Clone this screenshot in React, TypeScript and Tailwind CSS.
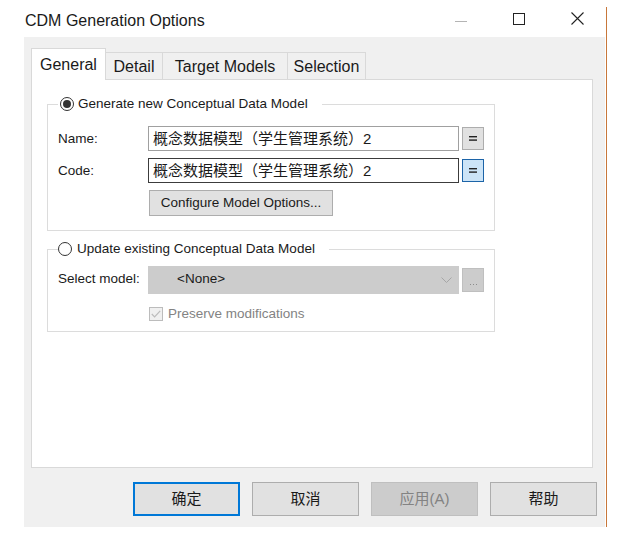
import React from "react";

const FONT = "font-['Liberation_Sans','Noto_Sans_CJK_SC',sans-serif]";

function Radio({ checked }: { checked?: boolean }) {
  return (
    <span className="flex h-[14px] w-[14px] shrink-0 items-center justify-center rounded-full border border-[#333333] bg-white">
      {checked && <span className="h-[8px] w-[8px] rounded-full bg-[#333333]" />}
    </span>
  );
}

function EqButton({ focused }: { focused?: boolean }) {
  return (
    <button
      className={
        focused
          ? "flex h-[23px] w-[22px] items-center justify-center border border-[#1c64a8] bg-[#cce4f7]"
          : "flex h-[23px] w-[22px] items-center justify-center border border-[#adadad] bg-[#e1e1e1]"
      }
    >
      <svg width="8" height="5" viewBox="0 0 8 5">
        <rect x="0" y="0" width="8" height="1.4" fill="#222" />
        <rect x="0" y="3.4" width="8" height="1.4" fill="#222" />
      </svg>
    </button>
  );
}

function TitleBar() {
  return (
    <div className="flex h-[37px] items-center bg-white">
      <span className="pl-[25px] pt-[4px] text-[16px] text-[#1a1a1a]">CDM Generation Options</span>
      <div className="ml-auto flex h-full">
        <div className="flex w-[58px] items-center justify-center">
          <span className="mt-[5px] h-px w-[12px] bg-[#b4b4b4]" />
        </div>
        <div className="flex w-[58px] items-center justify-center">
          <span className="h-[12px] w-[12px] border border-[#222]" />
        </div>
        <div className="flex w-[58px] items-center justify-center">
          <svg width="13" height="13" viewBox="0 0 13 13">
            <path d="M0.5 0.5 L12.5 12.5 M12.5 0.5 L0.5 12.5" stroke="#222" strokeWidth="1.1" />
          </svg>
        </div>
      </div>
    </div>
  );
}

function Tabs() {
  const others = [
    { label: "Detail", w: "w-[57px]" },
    { label: "Target Models", w: "w-[125px]" },
    { label: "Selection", w: "w-[78px]" },
  ];
  return (
    <div className="relative z-10 -mb-px flex items-end pl-[7px]">
      <div className="flex h-[32px] w-[75px] items-start border-x border-t border-[#d9d9d9] bg-white pl-[8px] pt-[4px] text-[16px]">
        General
      </div>
      {others.map((t) => (
        <div
          key={t.label}
          className={`flex h-[28px] ${t.w} items-center justify-center border-y border-r border-[#d9d9d9] bg-[#f0f0f0] pt-[1px] text-[16px]`}
        >
          {t.label}
        </div>
      ))}
    </div>
  );
}

function GenerateGroup() {
  return (
    <fieldset className="w-[447px] border border-[#dcdcdc] px-[10px] pb-[14px]">
      <legend className="flex items-center gap-[4px] pl-[2px] pr-[14px] text-[13.5px]">
        <Radio checked />
        <span>Generate new Conceptual Data Model</span>
      </legend>
      <div className="mt-[12px] flex flex-col gap-[7px]">
        <div className="flex items-center">
          <span className="w-[90px] text-[13.5px]">Name:</span>
          <div className="flex h-[25px] w-[311px] items-center border border-[#a0a0a0] bg-white pl-[4px] text-[15px]">
            概念数据模型（学生管理系统）2
          </div>
          <div className="ml-[3px]">
            <EqButton />
          </div>
        </div>
        <div className="flex items-center">
          <span className="w-[90px] text-[13.5px]">Code:</span>
          <div className="flex h-[25px] w-[311px] items-center border border-[#3c3c3c] bg-white pl-[4px] text-[15px]">
            概念数据模型（学生管理系统）2
          </div>
          <div className="ml-[3px]">
            <EqButton focused />
          </div>
        </div>
        <div className="flex pl-[91px]">
          <button className="h-[26px] w-[184px] border border-[#adadad] bg-[#e1e1e1] text-[13.5px]">
            Configure Model Options...
          </button>
        </div>
      </div>
    </fieldset>
  );
}

function UpdateGroup() {
  return (
    <fieldset className="w-[447px] border border-[#dcdcdc] px-[10px] pb-[7px]">
      <legend className="flex items-center gap-[5px] pr-[14px] text-[13.5px]">
        <Radio />
        <span>Update existing Conceptual Data Model</span>
      </legend>
      <div className="mt-[6px] flex items-center">
        <span className="w-[90px] text-[13.5px]">Select model:</span>
        <div className="flex h-[28px] w-[311px] items-center border border-[#cccccc] bg-[#cccccc] pl-[28px] text-[13.5px]">
          <span>&lt;None&gt;</span>
          <svg className="ml-auto mr-[6px]" width="11" height="6" viewBox="0 0 11 6">
            <path d="M0.5 0.5 L5.5 5.5 L10.5 0.5" stroke="#a6a6a6" fill="none" strokeWidth="1" />
          </svg>
        </div>
        <div className="ml-[3px] flex h-[24px] w-[22px] items-end justify-center border border-[#bfbfbf] bg-[#cccccc] pb-[6px]">
          <span className="flex gap-[2px]">
            <span className="h-px w-px bg-[#8c8c8c]" />
            <span className="h-px w-px bg-[#8c8c8c]" />
            <span className="h-px w-px bg-[#8c8c8c]" />
          </span>
        </div>
      </div>
      <div className="mt-[10px] flex items-center gap-[5px] pl-[91px]">
        <span className="flex h-[14px] w-[14px] items-center justify-center border border-[#bcbcbc] bg-[#f0f0f0]">
          <svg width="10" height="8" viewBox="0 0 10 8">
            <path d="M0.8 4 L3.6 6.8 L9.2 0.8" stroke="#bcbcbc" fill="none" strokeWidth="1.2" />
          </svg>
        </span>
        <span className="text-[13.5px] text-[#838383]">Preserve modifications</span>
      </div>
    </fieldset>
  );
}

function Footer() {
  const base = "h-[34px] w-[107px] text-[15px]";
  return (
    <div className="mt-[14px] flex justify-end gap-[12px] pr-[8px]">
      <button className={`${base} border-2 border-[#0078d7] bg-[#e1e1e1]`}>确定</button>
      <button className={`${base} border border-[#adadad] bg-[#e1e1e1]`}>取消</button>
      <button className={`${base} border border-[#bfbfbf] bg-[#cccccc] text-[#838383]`}>应用(A)</button>
      <button className={`${base} border border-[#adadad] bg-[#e1e1e1]`}>帮助</button>
    </div>
  );
}

export default function App() {
  return (
    <div className={`flex h-[545px] w-[624px] bg-white text-[#1a1a1a] ${FONT}`}>
      <div className="w-[606px]">
        <TitleBar />
        <div className="ml-[24px] h-[490px] w-[581px] bg-[#f0f0f0] pt-[11px]">
          <Tabs />
          <div className="ml-[7px] h-[389px] w-[562px] border border-[#d9d9d9] bg-white pl-[15px] pt-[14px]">
            <div className="flex flex-col gap-[8px]">
              <GenerateGroup />
              <UpdateGroup />
            </div>
          </div>
          <Footer />
        </div>
      </div>
      <div className="mt-[7px] h-[520px] w-px bg-[#c8773a]" />
    </div>
  );
}
